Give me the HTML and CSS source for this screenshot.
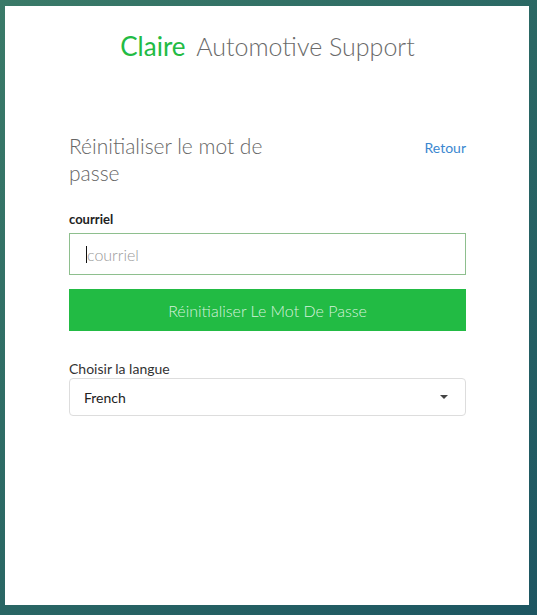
FILE: index.html
```html
<!DOCTYPE html>
<html lang="fr">
<head>
<meta charset="utf-8">
<title>Claire Automotive Support</title>
<link rel="stylesheet" href="styles.css">
</head>
<body>
<main class="card">
  <h1 class="brand"><span class="brand-name">Claire</span> <span class="brand-rest">Automotive Support</span></h1>
  <section class="form">
    <div class="form-head">
      <h2 class="form-title">Réinitialiser le mot de passe</h2>
      <a class="back" href="#">Retour</a>
    </div>
    <label class="field-label" for="email">courriel</label>
    <div class="input-box"><span class="caret"></span><span class="placeholder">courriel</span></div>
    <button class="submit" type="button">Réinitialiser Le Mot De Passe</button>
    <label class="lang-label">Choisir la langue</label>
    <div class="select-box"><span>French</span><span class="arrow"></span></div>
  </section>
</main>
</body>
</html>
```
FILE: styles.css
```css
* { box-sizing: border-box; }
html, body { margin: 0; height: 100%; }
body {
  background: linear-gradient(135deg, #3a7a68 0%, #2a6764 50%, #1d5662 100%);
  padding: 6px 8px 10px 5px;
  font-family: Lato, "Noto Sans", sans-serif;
}
.card {
  background: #fff;
  height: 599px;
  width: 524px;
  padding: 24px 63px 0 64px;
}
.brand {
  margin: 0;
  text-align: center;
  font-size: 26px;
  font-weight: 400;
  line-height: 32px;
}
.brand-name { color: #22bb44; margin-right: 4px; }
.brand-rest { color: #6a6a6a; font-weight: 300; font-size: 25px; }
.form { margin-top: 70px; display: flex; flex-direction: column; }
.form-head { display: flex; justify-content: space-between; align-items: flex-start; }
.form-title {
  margin: 0;
  width: 220px;
  font-size: 21px;
  font-weight: 300;
  color: #666;
  line-height: 27px;
}
.back {
  color: #3a87d0;
  text-decoration: none;
  font-size: 14px;
  margin-top: 7px;
}
.field-label {
  margin-top: 25px;
  font-size: 13px;
  font-weight: 700;
  color: #222;
  line-height: 16px;
}
.input-box {
  margin-top: 6px;
  height: 42px;
  border: 1px solid #8ebf8e;
  display: flex;
  align-items: center;
  padding-left: 16px;
}
.caret {
  width: 1px;
  height: 17px;
  background: #111;
}
.placeholder { color: #999; font-size: 16px; font-weight: 300; }
.submit {
  margin-top: 14px;
  height: 42px;
  border: none;
  background: #22bb44;
  color: rgba(255,255,255,0.82);
  font-family: Lato, sans-serif;
  font-size: 16px;
  font-weight: 300;
}
.lang-label {
  margin-top: 30px;
  font-size: 14px;
  color: #333;
  line-height: 16px;
}
.select-box {
  margin-top: 1px;
  height: 38px;
  border: 1px solid #ddd;
  border-radius: 4px;
  display: flex;
  align-items: center;
  justify-content: space-between;
  padding: 0 17px 0 14px;
  font-size: 14px;
  color: #222;
}
.arrow {
  width: 0; height: 0;
  border-left: 4px solid transparent;
  border-right: 4px solid transparent;
  border-top: 4px solid #444;
}
```
